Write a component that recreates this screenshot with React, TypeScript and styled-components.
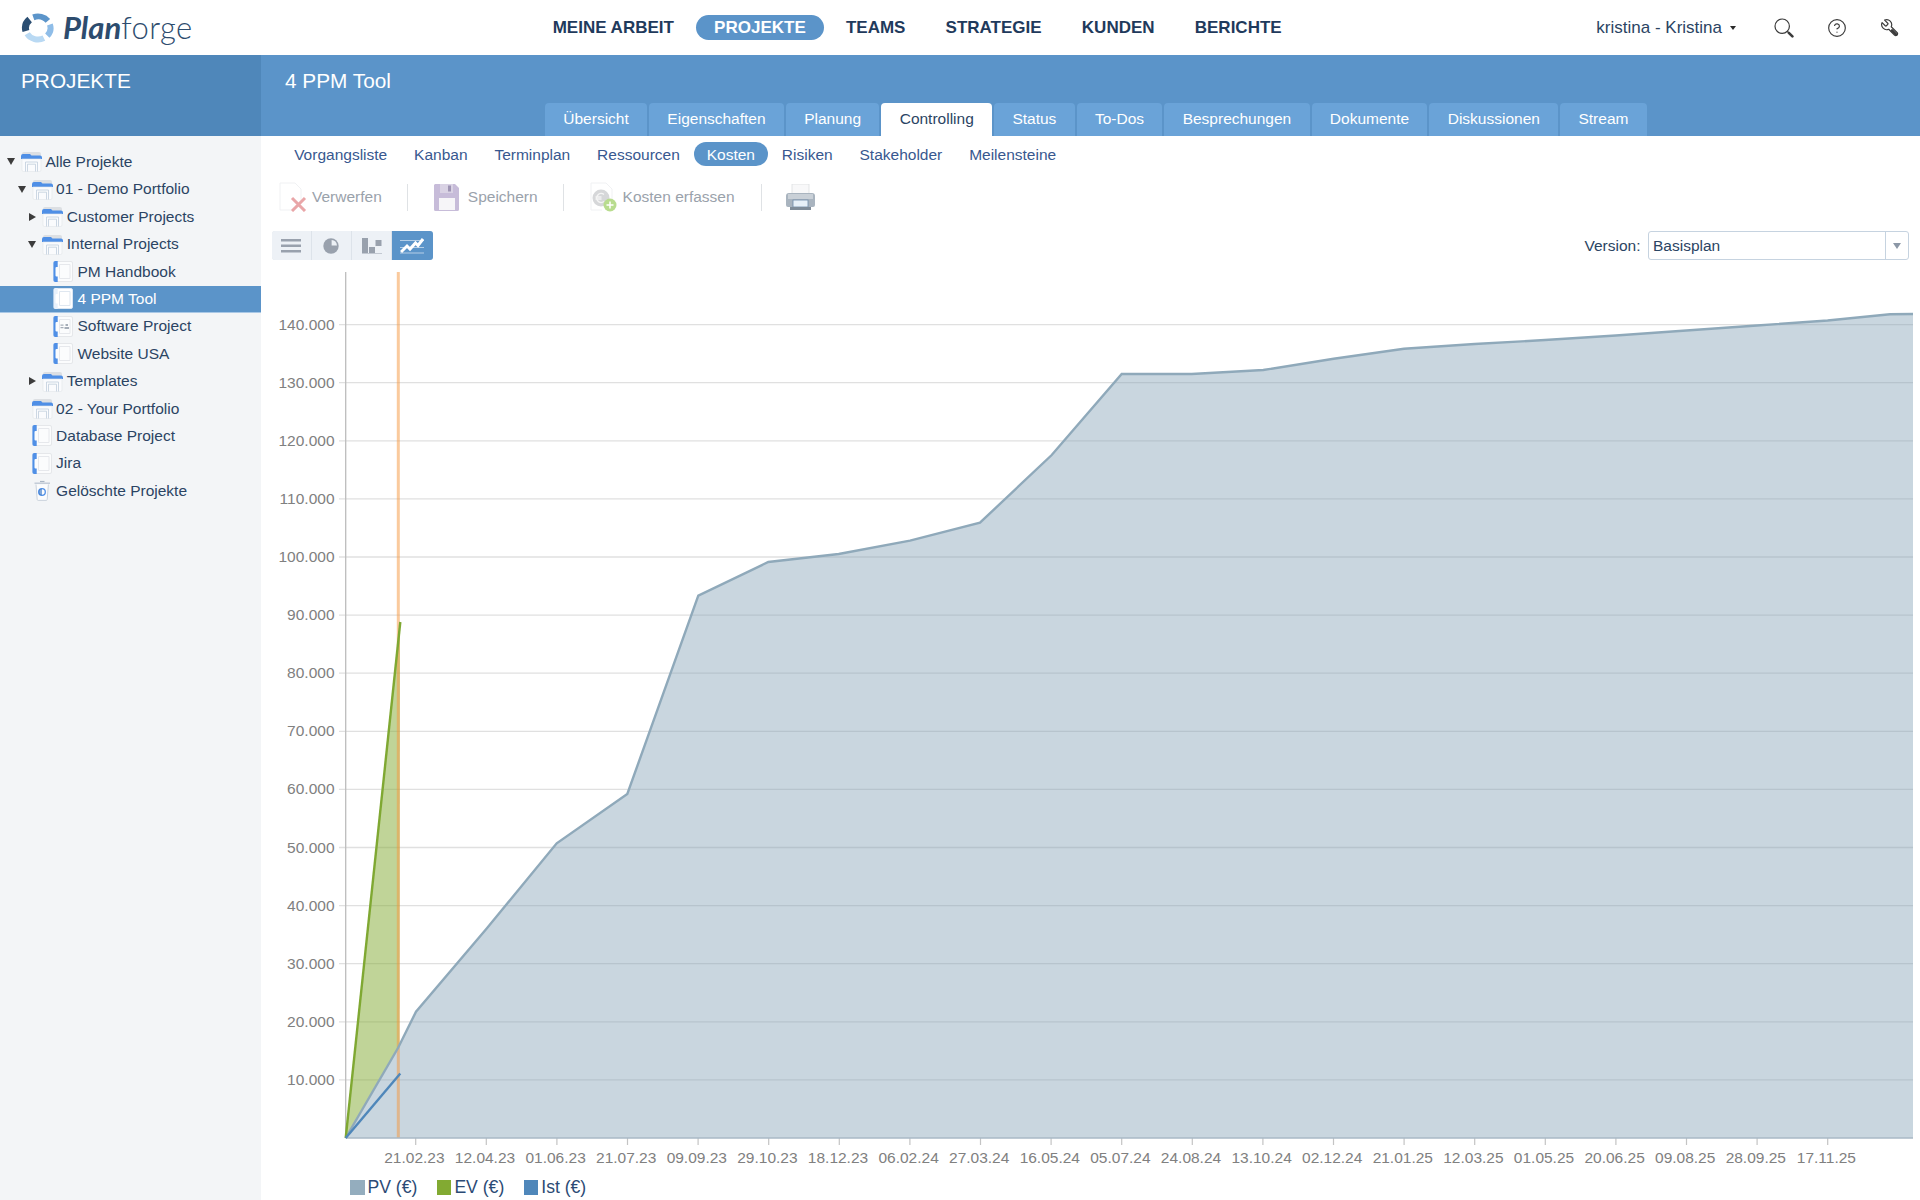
import React from "react";
import styled, { createGlobalStyle } from "styled-components";
import { CircleHelp } from "lucide-react";

const GlobalStyle = createGlobalStyle`
  html, body {
    margin: 0;
    padding: 0;
    background: #fff;
  }
  body {
    font-family: "Liberation Sans", Arial, sans-serif;
    font-size: 15.5px;
    color: #2b4463;
  }
`;

const Page = styled.div`
  width: 1920px;
  height: 1200px;
  overflow: hidden;
  display: flex;
  flex-direction: column;
`;

/* top bar */

const TopBar = styled.header`
  height: 55px;
  display: flex;
  align-items: center;
  flex-shrink: 0;
`;

const LogoBox = styled.div`
  width: 534.2px;
  height: 55px;
  padding-left: 21px;
  box-sizing: border-box;
  display: flex;
  align-items: center;
  gap: 8px;
`;

const LogoWord = styled.div`
  font-family: Lato, sans-serif;
  font-size: 31px;
  line-height: 55px;
  color: #2d4c6e;
  white-space: nowrap;
  b {
    font-style: italic;
    font-weight: 700;
  }
  span {
    font-weight: 300;
    letter-spacing: 0.4px;
  }
`;

const MainNav = styled.nav`
  display: flex;
  align-items: center;
  gap: 3.2px;
`;

const MainNavItem = styled.a<{ $active?: boolean }>`
  height: 25px;
  line-height: 25px;
  padding: 0 18.5px;
  border-radius: 13px;
  font-size: 17px;
  font-weight: bold;
  color: ${(p) => (p.$active ? "#fff" : "#1f3a5c")};
  background: ${(p) => (p.$active ? "#5b94c9" : "transparent")};
`;

const UserBox = styled.div`
  margin-left: auto;
  display: flex;
  align-items: center;
  padding-right: 20px;
`;

const UserName = styled.span`
  font-size: 17px;
  color: #2b4463;
  margin-right: 8px;
`;

const Caret = styled.i`
  width: 0;
  height: 0;
  border-left: 3.5px solid transparent;
  border-right: 3.5px solid transparent;
  border-top: 4px solid #2a2a2a;
  margin-right: 5px;
`;

const TopIcon = styled.span`
  width: 20px;
  height: 20px;
  margin-left: 33px;
  display: flex;
  color: #3b3b3b;
`;

/* blue band */

const Band = styled.div`
  height: 81px;
  display: flex;
  flex-shrink: 0;
  background: #5b94c9;
`;

const BandSide = styled.div`
  width: 261px;
  flex-shrink: 0;
  background: #4f87ba;
  padding: 14px 0 0 21px;
  box-sizing: border-box;
  font-size: 20.8px;
  line-height: 24px;
  color: #fff;
`;

const BandMain = styled.div`
  flex: 1;
  display: flex;
  flex-direction: column;
  justify-content: space-between;
`;

const BandTitle = styled.div`
  padding: 14px 0 0 24px;
  font-size: 20.8px;
  line-height: 24px;
  color: #fff;
`;

const Tabs = styled.div`
  display: flex;
  gap: 2px;
  padding-left: 284px;
`;

const Tab = styled.a<{ $active?: boolean }>`
  height: 33px;
  line-height: 32px;
  padding: 0 18.3px;
  border-radius: 4px 4px 0 0;
  color: ${(p) => (p.$active ? "#2b4463" : "#fff")};
  background: ${(p) => (p.$active ? "#fff" : "#6aa3d8")};
`;

/* body */

const Body = styled.div`
  flex: 1;
  display: flex;
  min-height: 0;
`;

const Sidebar = styled.aside`
  width: 261px;
  flex-shrink: 0;
  background: #f3f5f7;
  padding-top: 12.8px;
  box-sizing: border-box;
`;

const TreeRow = styled.div<{ $level: number; $selected?: boolean }>`
  height: 27.4px;
  box-sizing: border-box;
  padding-left: ${(p) => 7 + p.$level * 10.7}px;
  display: flex;
  align-items: center;
  color: ${(p) => (p.$selected ? "#fff" : "#2b4463")};
  background: ${(p) => (p.$selected ? "#5b94c9" : "transparent")};
  border-bottom: 1px solid ${(p) => (p.$selected ? "#a9c8e6" : "transparent")};
`;

const ToggleSlot = styled.span`
  width: 14px;
  flex-shrink: 0;
  display: flex;
  align-items: center;
`;

const Toggle = styled.i<{ $open: boolean }>`
  width: 0;
  height: 0;
  ${(p) =>
    p.$open
      ? `border-left: 4.4px solid transparent;
         border-right: 4.4px solid transparent;
         border-top: 7px solid #3c3c3c;`
      : `margin-left: 1px;
         border-top: 4.4px solid transparent;
         border-bottom: 4.4px solid transparent;
         border-left: 7px solid #3c3c3c;`}
`;

const TreeIconBox = styled.span`
  width: 21px;
  height: 21px;
  flex-shrink: 0;
  margin-right: 3.4px;
  display: flex;
`;

const Content = styled.main`
  flex: 1;
  min-width: 0;
  display: flex;
  flex-direction: column;
`;

const SubNav = styled.div`
  height: 36px;
  flex-shrink: 0;
  padding-left: 20px;
  display: flex;
  align-items: center;
  gap: 0.6px;
`;

const SubNavItem = styled.a<{ $active?: boolean }>`
  height: 24px;
  line-height: 25px;
  padding: 0 13.15px;
  border-radius: 12px;
  color: ${(p) => (p.$active ? "#fff" : "#38588f")};
  background: ${(p) => (p.$active ? "#5b94c9" : "transparent")};
`;

const Toolbar = styled.div`
  height: 50px;
  flex-shrink: 0;
  padding-left: 18px;
  display: flex;
  align-items: center;
`;

const ToolButton = styled.button<{ $iconGap: number }>`
  all: unset;
  display: flex;
  align-items: center;
  gap: ${(p) => p.$iconGap}px;
  font-size: 15.5px;
  color: #9aa2ab;
`;

const ToolSeparator = styled.span<{ $left: number; $right: number }>`
  width: 1px;
  height: 27px;
  background: #dfe2e5;
  margin: 0 ${(p) => p.$right}px 0 ${(p) => p.$left}px;
`;

const Controls = styled.div`
  height: 29px;
  margin-top: 9px;
  flex-shrink: 0;
  padding: 0 11px 0 10.5px;
  display: flex;
  align-items: center;
  justify-content: space-between;
`;

const ViewSwitch = styled.div`
  display: flex;
  height: 29px;
  border-radius: 3px;
  overflow: hidden;
  box-shadow: inset 0 0 0 1px #dde3ea;
`;

const ViewButton = styled.span<{ $active?: boolean }>`
  width: 40.25px;
  display: flex;
  align-items: center;
  justify-content: center;
  background: ${(p) => (p.$active ? "#5b94c9" : "#edf1f6")};
  border-right: 1px solid #dde3ea;
  box-sizing: border-box;
  &:last-child {
    border-right: 0;
  }
`;

const VersionBox = styled.div`
  display: flex;
  align-items: center;
  gap: 7.5px;
`;

const SelectBox = styled.div`
  width: 261px;
  height: 29px;
  box-sizing: border-box;
  border: 1px solid #c6d3e0;
  border-radius: 3px;
  display: flex;
  align-items: center;
  justify-content: space-between;
  padding-left: 4px;
  color: #2b4463;
`;

const SelectArrow = styled.span`
  width: 22px;
  height: 100%;
  border-left: 1px solid #c6d3e0;
  display: flex;
  align-items: center;
  justify-content: center;
  &::after {
    content: "";
    border-left: 4.5px solid transparent;
    border-right: 4.5px solid transparent;
    border-top: 6px solid #8c97a6;
  }
`;

const ChartSvg = styled.svg`
  display: block;
  flex-shrink: 0;
  margin-top: 2px;
  text {
    font-family: "Liberation Sans", Arial, sans-serif;
    font-size: 15.5px;
    fill: #808080;
  }
`;

const Legend = styled.div`
  margin-top: 9px;
  padding-left: 89px;
  display: flex;
  gap: 19.5px;
`;

const LegendItem = styled.span`
  display: flex;
  align-items: center;
  gap: 3px;
  font-size: 17.6px;
  line-height: 17px;
  color: #2b4a75;
`;

const Swatch = styled.i<{ $color: string }>`
  width: 14.5px;
  height: 15px;
  background: ${(p) => p.$color};
`;

/* drawings */

const ringPoint = (deg: number) => {
  const a = (deg * Math.PI) / 180;
  return `${(17 + 12.5 * Math.cos(a)).toFixed(2)} ${(15 + 11.5 * Math.sin(a)).toFixed(2)}`;
};
const ringArc = (from: number, to: number) =>
  `M${ringPoint(from)} A12.5 11.5 0 0 1 ${ringPoint(to)}`;

const LogoIcon = () => (
  <svg width="34" height="30" viewBox="0 0 34 30" fill="none" strokeWidth="6">
    <path d={ringArc(-112, -38)} stroke="#5c95ca" />
    <path d={ringArc(-18, 42)} stroke="#8fbde8" />
    <path d={ringArc(62, 150)} stroke="#b9d9f3" />
    <path d={ringArc(165, 228)} stroke="#2b4e72" strokeWidth="7" />
  </svg>
);

const SearchIcon = () => (
  <svg width="20" height="20" viewBox="0 0 20 20" fill="none" stroke="#3b3b3b">
    <circle cx="8.2" cy="8.2" r="7.2" strokeWidth="1.2" />
    <path d="M13.4 13.4l1.4 1.4" strokeWidth="1.2" />
    <path d="M14.8 14.8l3.6 3.6" strokeWidth="2.6" strokeLinecap="round" />
  </svg>
);

const WrenchIcon = () => (
  <svg width="20" height="20" viewBox="0 0 24 24" fill="none" stroke="#3b3b3b">
    <g transform="translate(24 0) scale(-1 1)">
      <path
        d="M14.7 6.3a1 1 0 0 0 0 1.4l1.6 1.6a1 1 0 0 0 1.4 0l3.770-3.770a6 6 0 0 1-7.940 7.940l-6.910 6.910a2.120 2.120 0 0 1-3-3l6.910-6.910a6 6 0 0 1 7.940-7.940l-3.760 3.760z"
        strokeWidth="1.400"
        strokeLinejoin="round"
      />
      <path d="M9.500 15l-5 5" strokeWidth="3.200" strokeLinecap="round" />
    </g>
  </svg>
);

const FolderIcon = () => (
  <svg width="21" height="21" viewBox="0 0 21 21">
    <path d="M1 3a2 2 0 0 1 2-2h15a2 2 0 0 1 2 2v3H1z" fill="#dcdfe3" />
    <path d="M0 8V5a2 2 0 0 1 2-2h7l1.500 1.500H19a2 2 0 0 1 2 2V8z" fill="#4f8fe6" />
    <path d="M1 8h19v11a1.500 1.500 0 0 1-1.500 1.500h-16A1.500 1.500 0 0 1 1 19z" fill="#fafbfd" stroke="#e2e6ea" strokeWidth=".6" />
    <path d="M4.500 20.500V11h12v9.500M6.500 20.500V13.200h8v7.300" fill="none" stroke="#c6d2e0" strokeWidth=".9" />
  </svg>
);

const ProjectIcon = ({ detail, bright }: { detail?: boolean; bright?: boolean }) => (
  <svg width="21" height="21" viewBox="0 0 21 21">
    <rect x="1.500" y=".5" width="18" height="20" rx="1.500" fill={bright ? "#fff" : "#fbfcfd"} stroke={bright ? "#e6eef6" : "#dfe2e6"} strokeWidth=".8" />
    <path d="M4.700 0H2.200A1.800 1.800 0 0 0 .4 1.800v17.400A1.800 1.800 0 0 0 2.200 21h2.500V15.500H3.500a1 1 0 0 1-1-1V7a1 1 0 0 1 1-1h1.200z" fill={bright ? "#e8f1fb" : "#4f8fe6"} />
    <path d="M6.500 3.500h10.500v14H6.500z" fill="none" stroke={bright ? "#dfe7f0" : "#e6e8ec"} strokeWidth="1" />
    {detail && (
      <path d="M7.500 8.500h3v1.200h-3zM7.500 11h3v1.200h-3zM12.500 8h2.500v2h-2.500zM11.500 11h4.500v2h-4.500z" fill="#a5adb8" />
    )}
  </svg>
);

const TrashIcon = () => (
  <svg width="21" height="21" viewBox="0 0 21 21" fill="none">
    <path d="M8 1.500h4.500" stroke="#a9b5c4" strokeWidth="1.200" />
    <path d="M2.500 3.200h15.500" stroke="#bcc6d2" strokeWidth="1.300" />
    <path d="M4 4.500l1.200 15a1 1 0 0 0 1 .9h8a1 1 0 0 0 1-.9l1.200-15" fill="#fbfcfd" stroke="#c5ced9" strokeWidth=".9" />
    <circle cx="10" cy="12" r="3.300" stroke="#4f8fe6" strokeWidth="1.300" />
    <path d="M10 8.700a3.300 3.300 0 0 0 0 6.600z" fill="#2f6fc4" opacity=".6" />
  </svg>
);

const DiscardIcon = () => (
  <svg width="28" height="30" viewBox="0 0 28 30" fill="none">
    <path d="M1 1h15l6 6v12M1 1v27h11" stroke="#f0f1f3" strokeWidth="1" />
    <path d="M13 16l13 13M26 16L13 29" stroke="#e9a6a8" strokeWidth="3" />
  </svg>
);

const SaveIcon = () => (
  <svg width="25" height="27" viewBox="0 0 25 27">
    <path d="M1 0h20l4 4v21.500a1.500 1.500 0 0 1-1.500 1.500H1.500A1.500 1.500 0 0 1 0 25.500V1z" fill="#c7bcd9" />
    <rect x="5" y="14" width="16" height="12" fill="#f6f5f8" />
    <rect x="6" y="0" width="13" height="9" fill="#d9d2e4" />
    <rect x="14" y="1.500" width="3" height="6" fill="#9e94b3" />
  </svg>
);

const AddCostIcon = () => (
  <svg width="27" height="30" viewBox="0 0 27 30" fill="none">
    <path d="M1 1h15l6 6v12M1 1v27h11" stroke="#f0f1f3" strokeWidth="1" />
    <circle cx="11" cy="16" r="8.500" fill="#d6d7d9" />
    <path d="M14 12.500a4.500 4.500 0 1 0 0 7M5.500 15h6M5.500 17h6" stroke="#f4f4f4" strokeWidth="1.300" />
    <circle cx="20" cy="23" r="6.500" fill="#b8dc8e" />
    <path d="M20 19.500v7M16.500 23h7" stroke="#fff" strokeWidth="1.500" />
  </svg>
);

const PrinterIcon = () => (
  <svg width="29" height="27" viewBox="0 0 29 27">
    <rect x="6" y="0" width="17" height="11" fill="#f8f8f9" stroke="#dcdee1" strokeWidth=".8" />
    <path d="M3 9h23a3 3 0 0 1 3 3v9a2 2 0 0 1-2 2H2a2 2 0 0 1-2-2v-9a3 3 0 0 1 3-3z" fill="#a9b4bf" />
    <rect x="2" y="10" width="25" height="5" fill="#c9d0d7" />
    <rect x="7" y="16" width="15" height="7" fill="#e7f0f8" stroke="#6f8ba8" strokeWidth=".8" />
    <rect x="4" y="23" width="21" height="3" fill="#7f8c99" />
  </svg>
);

const ListGlyph = () => (
  <svg width="20" height="14" viewBox="0 0 20 14" fill="#99a1ad">
    <rect width="20" height="2.500" />
    <rect y="5.500" width="20" height="2.500" />
    <rect y="11" width="20" height="2.500" />
  </svg>
);

const PieGlyph = () => (
  <svg width="16" height="16" viewBox="0 0 16 16">
    <circle cx="8" cy="8" r="7.700" fill="#99a1ad" />
    <path d="M8.600 2v5.400H14A6 6 0 0 0 8.600 2z" fill="#edf1f6" />
  </svg>
);

const BarsGlyph = () => (
  <svg width="20" height="16" viewBox="0 0 20 16" fill="#99a1ad">
    <rect x="0" y="0" width="6" height="15" />
    <rect x="7" y="9" width="6" height="6" />
    <rect x="13.500" y="2" width="6" height="6" />
    <rect x="0" y="15" width="20" height="1" opacity=".5" />
  </svg>
);

const LineGlyph = () => (
  <svg width="24" height="16" viewBox="0 0 24 16" fill="none" stroke="#fff">
    <path d="M0 2.500h24M0 9.500h24M0 15h24" strokeWidth="1" opacity=".55" />
    <path d="M1 14l6-6 3 3 5.500-6 2.500 2.500L23 1" strokeWidth="3" />
  </svg>
);

/* chart data, in page coordinates */

const BASE_Y = 1138;
const AXIS_X = 345.7;
const END_X = 1913;
const STEP_Y = 58.1;
const FIRST_TICK = 415.7;
const STEP_X = 70.6;

const dates = [
  "21.02.23", "12.04.23", "01.06.23", "21.07.23", "09.09.23", "29.10.23", "18.12.23",
  "06.02.24", "27.03.24", "16.05.24", "05.07.24", "24.08.24", "13.10.24", "02.12.24",
  "21.01.25", "12.03.25", "01.05.25", "20.06.25", "09.08.25", "28.09.25", "17.11.25",
];

const planned: [number, number][] = [
  [AXIS_X, BASE_Y], [398, 1048], [416, 1011.7], [486.7, 928.5], [556.7, 843.3], [627.3, 794],
  [698.3, 595.7], [768.3, 562], [838.7, 554], [910, 540.7], [980, 522.7], [1051.7, 455],
  [1121.7, 374], [1191.7, 374], [1263.3, 370], [1333.7, 358.8], [1404, 348.7], [1474.6, 344],
  [1545, 340], [1615.8, 335.5], [1686.4, 330.5], [1757, 325.5], [1827.6, 320.5], [1890, 314.3],
  [END_X, 314],
];

const toPoints = (pts: [number, number][]) => pts.map((p) => p.join(",")).join(" ");

const CostChart = () => {
  const rows = Array.from({ length: 14 }, (_, i) => i + 1);
  return (
    <ChartSvg width="1659" height="908" viewBox="261 262 1659 908">
      {rows.map((r) => {
        const y = BASE_Y - r * STEP_Y;
        return (
          <g key={r}>
            <line x1="339" x2={END_X} y1={y} y2={y} stroke="#e0e0e0" strokeWidth="1.3" />
            <text x="334.500" y={y + 5} textAnchor="end">
              {r * 10}.000
            </text>
          </g>
        );
      })}
      <line x1={AXIS_X} x2={AXIS_X} y1="272" y2={BASE_Y} stroke="#bcbcbc" strokeWidth="1.3" />
      {dates.map((d, i) => {
        const x = FIRST_TICK + i * STEP_X;
        return (
          <g key={d}>
            <line x1={x} x2={x} y1={BASE_Y} y2={BASE_Y + 7} stroke="#c4c4c4" strokeWidth="1.2" />
            <text x={x - 1.3} y="1162.800" textAnchor="middle">
              {d}
            </text>
          </g>
        );
      })}
      <polygon
        points={toPoints([...planned, [END_X, BASE_Y]])}
        fill="rgba(127,158,178,.42)"
      />
      <polygon
        points={`${AXIS_X},${BASE_Y} 400,622 399.500,1045 398,1048`}
        fill="rgba(130,170,50,.5)"
      />
      <line x1="398.300" x2="398.300" y1="272" y2={BASE_Y} stroke="rgba(245,150,60,.5)" strokeWidth="3" />
      <line x1={AXIS_X} x2={END_X} y1={BASE_Y} y2={BASE_Y} stroke="#a8b9c6" strokeWidth="1.300" />
      <polyline points={toPoints(planned)} fill="none" stroke="#8fa9ba" strokeWidth="2.400" />
      <line x1={AXIS_X} y1={BASE_Y} x2="400.300" y2="622" stroke="#7fa832" strokeWidth="2.400" />
      <line x1={AXIS_X} y1={BASE_Y} x2="400.300" y2="1073.500" stroke="#4f87ba" strokeWidth="2.400" />
    </ChartSvg>
  );
};

type TreeEntry = {
  label: string;
  level: number;
  icon: "folder" | "project" | "detail" | "trash";
  toggle?: "open" | "closed";
  selected?: boolean;
};

const tree: TreeEntry[] = [
  { label: "Alle Projekte", level: 0, icon: "folder", toggle: "open" },
  { label: "01 - Demo Portfolio", level: 1, icon: "folder", toggle: "open" },
  { label: "Customer Projects", level: 2, icon: "folder", toggle: "closed" },
  { label: "Internal Projects", level: 2, icon: "folder", toggle: "open" },
  { label: "PM Handbook", level: 3, icon: "project" },
  { label: "4 PPM Tool", level: 3, icon: "project", selected: true },
  { label: "Software Project", level: 3, icon: "detail" },
  { label: "Website USA", level: 3, icon: "project" },
  { label: "Templates", level: 2, icon: "folder", toggle: "closed" },
  { label: "02 - Your Portfolio", level: 1, icon: "folder" },
  { label: "Database Project", level: 1, icon: "project" },
  { label: "Jira", level: 1, icon: "project" },
  { label: "Gelöschte Projekte", level: 1, icon: "trash" },
];

const mainNav = ["MEINE ARBEIT", "PROJEKTE", "TEAMS", "STRATEGIE", "KUNDEN", "BERICHTE"];
const tabs = [
  "Übersicht", "Eigenschaften", "Planung", "Controlling", "Status", "To-Dos",
  "Besprechungen", "Dokumente", "Diskussionen", "Stream",
];
const subNav = [
  "Vorgangsliste", "Kanban", "Terminplan", "Ressourcen", "Kosten", "Risiken", "Stakeholder", "Meilensteine",
];

const App: React.FC = () => {
  return (
    <Page>
      <GlobalStyle />
      <TopBar>
        <LogoBox>
          <LogoIcon />
          <LogoWord>
            <b>Plan</b>
            <span>forge</span>
          </LogoWord>
        </LogoBox>
        <MainNav>
          {mainNav.map((n) => (
            <MainNavItem key={n} $active={n === "PROJEKTE"}>
              {n}
            </MainNavItem>
          ))}
        </MainNav>
        <UserBox>
          <UserName>kristina - Kristina</UserName>
          <Caret />
          <TopIcon>
            <SearchIcon />
          </TopIcon>
          <TopIcon>
            <CircleHelp size={20} strokeWidth={1.4} />
          </TopIcon>
          <TopIcon>
            <WrenchIcon />
          </TopIcon>
        </UserBox>
      </TopBar>
      <Band>
        <BandSide>PROJEKTE</BandSide>
        <BandMain>
          <BandTitle>4 PPM Tool</BandTitle>
          <Tabs>
            {tabs.map((t) => (
              <Tab key={t} $active={t === "Controlling"}>
                {t}
              </Tab>
            ))}
          </Tabs>
        </BandMain>
      </Band>
      <Body>
        <Sidebar>
          {tree.map((e) => (
            <TreeRow key={e.label} $level={e.level} $selected={e.selected}>
              <ToggleSlot>{e.toggle && <Toggle $open={e.toggle === "open"} />}</ToggleSlot>
              <TreeIconBox>
                {e.icon === "folder" && <FolderIcon />}
                {e.icon === "project" && <ProjectIcon bright={e.selected} />}
                {e.icon === "detail" && <ProjectIcon detail />}
                {e.icon === "trash" && <TrashIcon />}
              </TreeIconBox>
              {e.label}
            </TreeRow>
          ))}
        </Sidebar>
        <Content>
          <SubNav>
            {subNav.map((s) => (
              <SubNavItem key={s} $active={s === "Kosten"}>
                {s}
              </SubNavItem>
            ))}
          </SubNav>
          <Toolbar>
            <ToolButton $iconGap={5}>
              <DiscardIcon />
              Verwerfen
            </ToolButton>
            <ToolSeparator $left={25} $right={26} />
            <ToolButton $iconGap={9}>
              <SaveIcon />
              Speichern
            </ToolButton>
            <ToolSeparator $left={25} $right={26} />
            <ToolButton $iconGap={6}>
              <AddCostIcon />
              Kosten erfassen
            </ToolButton>
            <ToolSeparator $left={26} $right={24} />
            <ToolButton $iconGap={0}>
              <PrinterIcon />
            </ToolButton>
          </Toolbar>
          <Controls>
            <ViewSwitch>
              <ViewButton>
                <ListGlyph />
              </ViewButton>
              <ViewButton>
                <PieGlyph />
              </ViewButton>
              <ViewButton>
                <BarsGlyph />
              </ViewButton>
              <ViewButton $active>
                <LineGlyph />
              </ViewButton>
            </ViewSwitch>
            <VersionBox>
              Version:
              <SelectBox>
                Basisplan
                <SelectArrow />
              </SelectBox>
            </VersionBox>
          </Controls>
          <CostChart />
          <Legend>
            <LegendItem>
              <Swatch $color="#94adbe" />
              PV (€)
            </LegendItem>
            <LegendItem>
              <Swatch $color="#82aa32" />
              EV (€)
            </LegendItem>
            <LegendItem>
              <Swatch $color="#4f87ba" />
              Ist (€)
            </LegendItem>
          </Legend>
        </Content>
      </Body>
    </Page>
  );
};

export default App;
